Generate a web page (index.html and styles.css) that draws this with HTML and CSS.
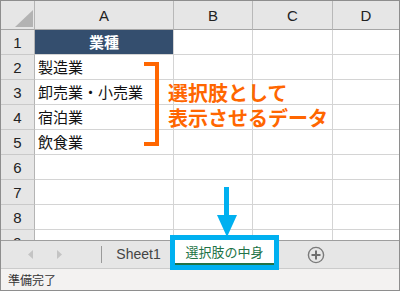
FILE: index.html
```html
<!DOCTYPE html>
<html lang="ja">
<head>
    <meta charset="UTF-8">
    <title>選択肢の中身</title>
    <link rel="stylesheet" href="styles.css">
</head>
<body>
    <div class="window">
        <div class="sheet">
            <div class="grid">
                <div class="corner">
                    <svg width="33" height="28" viewBox="0 0 33 28"><polygon points="14,26 32,26 32,9" fill="#b3b3b3"/></svg>
                </div>
                <div class="col-hd">A</div>
                <div class="col-hd">B</div>
                <div class="col-hd">C</div>
                <div class="col-hd last">D</div>

                <div class="row-hd">1</div>
                <div class="cell title">業種</div>
                <div class="cell"></div><div class="cell"></div><div class="cell last"></div>

                <div class="row-hd">2</div>
                <div class="cell">製造業</div>
                <div class="cell"></div><div class="cell"></div><div class="cell last"></div>

                <div class="row-hd">3</div>
                <div class="cell">卸売業・小売業</div>
                <div class="cell"></div><div class="cell"></div><div class="cell last"></div>

                <div class="row-hd">4</div>
                <div class="cell">宿泊業</div>
                <div class="cell"></div><div class="cell"></div><div class="cell last"></div>

                <div class="row-hd">5</div>
                <div class="cell">飲食業</div>
                <div class="cell"></div><div class="cell"></div><div class="cell last"></div>

                <div class="row-hd">6</div>
                <div class="cell"></div><div class="cell"></div><div class="cell"></div><div class="cell last"></div>

                <div class="row-hd">7</div>
                <div class="cell"></div><div class="cell"></div><div class="cell"></div><div class="cell last"></div>

                <div class="row-hd">8</div>
                <div class="cell"></div><div class="cell"></div><div class="cell"></div><div class="cell last"></div>

                <div class="row-hd">9</div>
                <div class="cell"></div><div class="cell"></div><div class="cell"></div><div class="cell last"></div>
            </div>

            <!-- annotations over the grid -->
            <div class="bracket"></div>
            <div class="note">選択肢として<br>表示させるデータ</div>
            <svg class="arrow" width="22" height="50" viewBox="0 0 22 50">
                <rect x="8" y="0" width="5" height="29" fill="#00b0f0"/>
                <polygon points="1,28 21,28 11,50" fill="#00b0f0"/>
            </svg>
        </div>

        <div class="tabs">
            <div class="tab-nav">
                <svg width="6" height="9" viewBox="0 0 6 9"><polygon points="5,0 5,9 0,4.5" fill="#c4c4c4"/></svg>
                <svg width="6" height="9" viewBox="0 0 6 9"><polygon points="1,0 1,9 6,4.5" fill="#c4c4c4"/></svg>
            </div>
            <div class="tab-sep"></div>
            <div class="tab">Sheet1</div>
            <div class="tab active">選択肢の中身</div>
            <div class="add-sheet">
                <svg width="18" height="18" viewBox="0 0 18 18">
                    <circle cx="9" cy="9" r="7.6" fill="none" stroke="#7a7a7a" stroke-width="1.4"/>
                    <rect x="8" y="4.5" width="2" height="9" fill="#6e6e6e"/>
                    <rect x="4.5" y="8" width="9" height="2" fill="#6e6e6e"/>
                </svg>
            </div>
        </div>

        <div class="status">準備完了</div>
    </div>
</body>
</html>
```

FILE: styles.css
```css
body {
    margin: 0;
    font-family: "Liberation Sans", "Noto Sans CJK JP", sans-serif;
    background: white;
}
.window {
    width: 400px;
    height: 291px;
    box-sizing: border-box;
    border: 1px solid #8e8e8e;
    display: flex;
    flex-direction: column;
    overflow: hidden;
}
.sheet {
    position: relative;
    height: 239px;
    overflow: hidden;
    flex-shrink: 0;
}
.grid {
    display: grid;
    grid-template-columns: 34px 139px 79px 80px 66px;
    grid-template-rows: 29px;
    grid-auto-rows: 25px;
}
.grid > div {
    box-sizing: border-box;
}
.corner {
    background: #e6e6e6;
    border-right: 1px solid #b4b4b4;
    border-bottom: 1px solid #a6a6a6;
}
.corner svg {
    display: block;
}
.col-hd {
    background: #e6e6e6;
    border-right: 1px solid #b8b8b8;
    border-bottom: 1px solid #a6a6a6;
    display: flex;
    align-items: center;
    justify-content: center;
    font-size: 15px;
    color: #222;
}
.col-hd.last {
    border-right: none;
}
.row-hd {
    background: #e6e6e6;
    border-right: 1px solid #b4b4b4;
    border-bottom: 1px solid #c9c9c9;
    display: flex;
    align-items: center;
    justify-content: center;
    font-size: 15px;
    color: #222;
}
.cell {
    border-right: 1px solid #d4d4d4;
    border-bottom: 1px solid #d4d4d4;
    display: flex;
    align-items: center;
    padding-left: 3px;
    padding-bottom: 2px;
    font-family: "Noto Sans CJK JP", sans-serif;
    font-size: 15px;
    color: #111;
    white-space: nowrap;
}
.cell.last {
    border-right: none;
}
.cell.title {
    background: #344e6e;
    color: white;
    font-weight: bold;
    justify-content: center;
    padding-left: 0;
}
.bracket {
    position: absolute;
    left: 143px;
    top: 61px;
    width: 15px;
    height: 84px;
    box-sizing: border-box;
    border: 4px solid #ff6600;
    border-left: none;
}
.note {
    position: absolute;
    left: 167px;
    top: 79px;
    font-family: "Noto Sans CJK JP", sans-serif;
    font-size: 20px;
    line-height: 25px;
    font-weight: bold;
    color: #ff6600;
    white-space: nowrap;
}
.arrow {
    position: absolute;
    left: 215px;
    top: 186px;
}
.tabs {
    height: 28px;
    box-sizing: border-box;
    border-top: 1px solid #9e9e9e;
    background: #e6e6e6;
    display: flex;
    align-items: flex-start;
    flex-shrink: 0;
}
.tab-nav {
    width: 100px;
    height: 27px;
    display: flex;
    align-items: center;
    gap: 22px;
    padding-left: 27px;
    box-sizing: border-box;
}
.tab-nav svg {
    display: block;
}
.tab-sep {
    width: 1px;
    height: 17px;
    margin-top: 5px;
    background: #9a9a9a;
}
.tab {
    width: 73px;
    height: 26px;
    display: flex;
    align-items: center;
    justify-content: center;
    font-size: 14px;
    color: #444;
    font-family: "Liberation Sans", "Noto Sans CJK JP", sans-serif;
}
.tab.active {
    position: relative;
    z-index: 1;
    width: 99px;
    height: 25px;
    margin-top: -1px;
    box-sizing: border-box;
    background: white;
    border-bottom: 2px solid #217346;
    color: #217346;
    font-size: 13px;
    font-family: "Noto Sans CJK JP", sans-serif;
    outline: 5px solid #00b0f0;
}
.add-sheet {
    margin-left: 33px;
    height: 27px;
    display: flex;
    align-items: center;
}
.add-sheet svg {
    display: block;
}
.status {
    flex: 1;
    box-sizing: border-box;
    border-top: 1px solid #cbcbcb;
    background: #f3f2f1;
    font-family: "Noto Sans CJK JP", sans-serif;
    font-size: 12px;
    color: #333;
    padding-left: 7px;
    display: flex;
    align-items: center;
}
```
